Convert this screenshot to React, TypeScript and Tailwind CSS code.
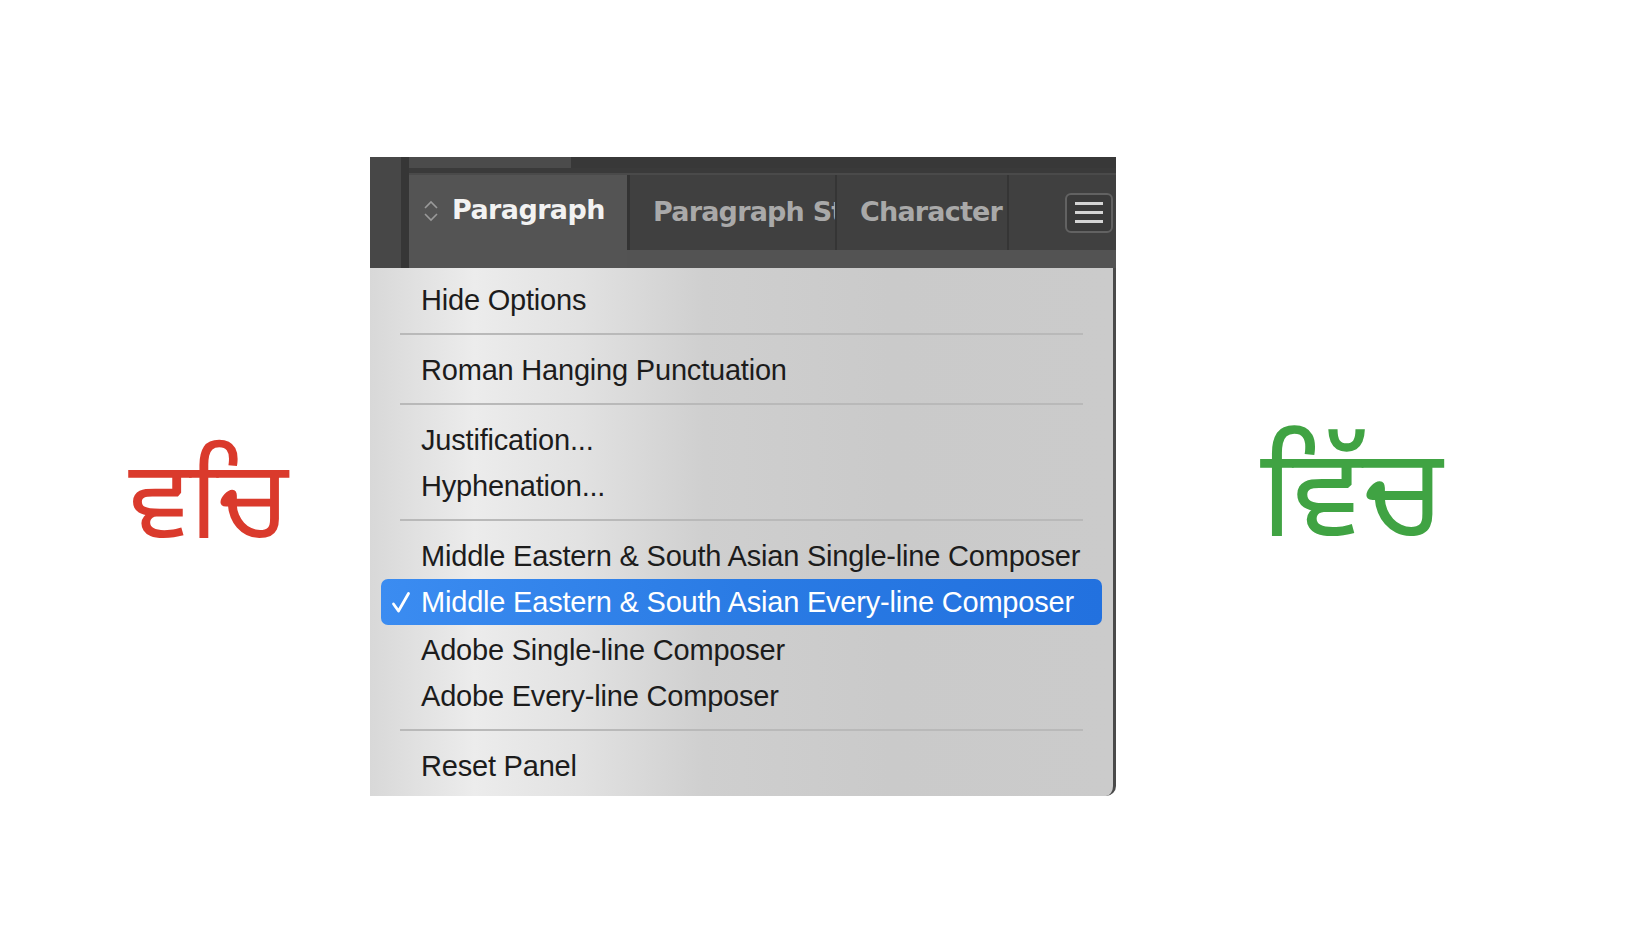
import React from 'react';

const menuFont = { fontFamily: '"Liberation Sans", Arial, sans-serif' };
const tabFont = { fontFamily: '"DejaVu Sans", Verdana, sans-serif' };
const gurmukhi = '"Noto Sans Gurmukhi", "Lohit Gurmukhi", "Raavi", "FreeSans", "Noto Sans", sans-serif';

function Sep() {
  return <div className="mx-[30px] mt-[10px] mb-[12px] h-[2px] bg-[#b9b9b9]" />;
}

function Item({ label, checked }: { label: string; checked?: boolean }) {
  if (checked) {
    return (
      <div className="mx-[11px] mb-[2px] flex h-[46px] items-center rounded-[7px] bg-[linear-gradient(90deg,#3b8cf1,#2a7be4_50%,#2271df)] text-white">
        <span className="flex w-[40px] justify-start pl-[10px]">
          <svg width="20" height="23" viewBox="0 0 20 23" fill="none" stroke="#ffffff" strokeWidth="2.8" strokeLinecap="round" strokeLinejoin="round">
            <path d="M2.5 13 L7.5 20 L17.5 2.5" />
          </svg>
        </span>
        <span className="text-[29px] leading-none tracking-[-0.2px]">{label}</span>
      </div>
    );
  }
  return (
    <div className="flex h-[46px] items-center pl-[51px] text-[29px] leading-none tracking-[-0.2px] text-[#1c1c1c]">
      {label}
    </div>
  );
}

function Header() {
  return (
    <div className="flex h-[111px] bg-[#3f3f3f]">
      <div className="w-[31px] bg-[#474747]" />
      <div className="w-[8px] bg-[#363636]" />
      <div className="flex flex-1 flex-col">
        <div className="flex h-[11px]">
          <div className="w-[162px] bg-[#4b4b4b]" />
          <div className="flex-1 bg-[#383838]" />
        </div>
        <div className="h-[5px] bg-[#3a3a3a]" />
        <div className="h-[2px] bg-[#4a4a4a]" />
        <div className="flex flex-1">
          <div className="flex w-[218px] items-center gap-[12px] bg-[#545454] pl-[13px] pb-[22px]">
            <svg width="18" height="24" viewBox="0 0 18 24" fill="none" stroke="#9a9a9a" strokeWidth="1.6">
              <path d="M3 9 L9 3 L15 9" />
              <path d="M3 15 L9 21 L15 15" />
            </svg>
            <span className="text-[27px] font-bold tracking-[-0.6px] text-[#f2f2f2]" style={tabFont}>
              Paragraph
            </span>
          </div>
          <div className="flex flex-1 flex-col">
            <div className="flex h-[75px] bg-[#404040]">
              <div className="w-[3px] bg-[#333333]" />
              <div className="flex w-[205px] items-center pl-[23px]">
                <span className="min-w-0 flex-1 overflow-hidden whitespace-nowrap text-[27px] font-bold tracking-[-0.8px] text-[#a9a9a9]" style={tabFont}>
                  Paragraph Styles
                </span>
              </div>
              <div className="w-[2px] bg-[#353535]" />
              <div className="flex w-[170px] items-center pl-[23px]">
                <span className="whitespace-nowrap text-[27px] font-bold tracking-[-0.8px] text-[#a9a9a9]" style={tabFont}>
                  Character
                </span>
              </div>
              <div className="w-[2px] bg-[#353535]" />
              <div className="flex flex-1 items-center justify-end pr-[3px]">
                <div className="flex h-[40px] w-[48px] flex-col items-center justify-center gap-[6px] rounded-[6px] border-2 border-[#626262] bg-[#3a3a3a]">
                  <div className="h-[3px] w-[28px] bg-[#d4d4d4]" />
                  <div className="h-[3px] w-[28px] bg-[#d4d4d4]" />
                  <div className="h-[3px] w-[28px] bg-[#d4d4d4]" />
                </div>
              </div>
            </div>
            <div className="flex-1 bg-[#535353]" />
          </div>
        </div>
      </div>
    </div>
  );
}

export default function App() {
  return (
    <div className="flex h-[948px] w-[1638px] bg-white">
      <div className="ml-[129px] mt-[457px] w-[241px]">
        <span
          className="whitespace-nowrap text-[109px] leading-none tracking-[-1px] text-[#da3a2c] [word-spacing:-0.26em]"
          style={{ fontFamily: gurmukhi }}
        >
          {'ਵ\u00A0ਿਚ'}
        </span>
      </div>
      <div className="mt-[157px] flex h-[639px] w-[746px] flex-col">
        <Header />
        <div
          className="flex flex-1 flex-col rounded-br-[10px] border-r-[3px] border-[#4a4a4a] bg-[linear-gradient(90deg,#d8d8d8_0%,#ececec_14%,#e2e2e2_28%,#cfcfcf_45%,#cacaca_70%,#cbcbcb_100%)] pt-[9px]"
          style={menuFont}
        >
          <Item label="Hide Options" />
          <Sep />
          <Item label="Roman Hanging Punctuation" />
          <Sep />
          <Item label="Justification..." />
          <Item label="Hyphenation..." />
          <Sep />
          <Item label="Middle Eastern & South Asian Single-line Composer" />
          <Item label="Middle Eastern & South Asian Every-line Composer" checked />
          <Item label="Adobe Single-line Composer" />
          <Item label="Adobe Every-line Composer" />
          <Sep />
          <Item label="Reset Panel" />
        </div>
      </div>
      <div className="ml-[145px] mt-[445px]">
        <span className="text-[123px] leading-none text-[#40a343]" style={{ fontFamily: gurmukhi }}>
          ਵਿੱਚ
        </span>
      </div>
    </div>
  );
}
